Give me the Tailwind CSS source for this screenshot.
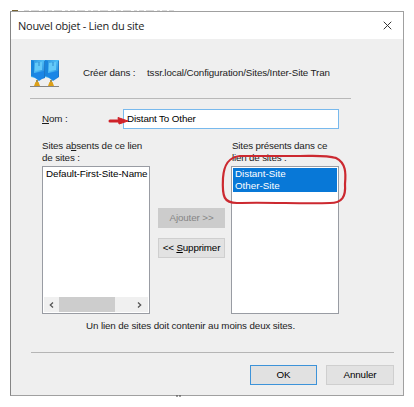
<!DOCTYPE html>
<html lang="fr">
<head>
<meta charset="utf-8">
<title>Nouvel objet - Lien du site</title>
<script src="https://cdn.jsdelivr.net/npm/@tailwindcss/browser@4"></script>
</head>
<body class="relative h-[407px] w-[414px] overflow-hidden bg-white pt-[11px] pl-[10px] font-['Liberation_Sans',Arial,sans-serif] text-[9.8px] leading-[12px] tracking-[-0.12px] text-[#1c1c1c]">
<main class="flex h-[385px] w-[394px] flex-col border border-[#a0a0a0] border-l-[#858585] bg-[#efefef] whitespace-nowrap">
  <header class="flex h-[27px] shrink-0 items-center justify-between bg-white pr-[11px] pl-[7px]">
    <h1 class="font-['Open_Sans','Noto_Sans',sans-serif] text-[11px] tracking-[-0.26px]">Nouvel objet - Lien du site</h1>
    <svg class="size-[9px]" viewBox="0 0 10 10" fill="none" stroke="#333" stroke-width="1.1"><path d="M.8.8l8.400 8.400M9.200.8L.8 9.200"/></svg>
  </header>

  <section class="ml-[19px] flex h-[60px] w-[321px] shrink-0 items-start border-b border-[#b8b8b8] pt-[20px]">
    <svg class="h-[29px] w-[30px] shrink-0" viewBox="0 0 30 29">
      <defs>
        <linearGradient id="b" x1="0" y1="0" x2="1" y2="1"><stop offset="0" stop-color="#2a8edb"/><stop offset=".45" stop-color="#4dbcf5"/><stop offset="1" stop-color="#0868cf"/></linearGradient>
      </defs>
      <path d="M1 1h14v18l-3 1-3 2-4-3-4-1z" fill="url(#b)"/>
      <path d="M15 1h14v17l-3 2-3 2-4-3-4-1z" fill="url(#b)"/>
      <path d="M1 1l3 1v16l-3-1zM15 1l3 1v16l-3-1z" fill="#1985dd"/>
      <path d="M5 4l7-1v8l-7 1zM19 4l7-1v8l-7 1z" fill="#64c9f8"/>
      <path d="M4 14l10-2v6l-5 3-5-3zM18 14l10-2v6l-5 3-5-3z" fill="#1a86e6"/>
      <path d="M14.500 2v16M9 3v4M23 3v4M28.500 2v15" stroke="#1b70bc" stroke-width=".7"/>
      <path d="M0 27.500h29" stroke="#858585"/>
      <path d="M7 21v3M21 21v3" stroke="#8b701d" stroke-width="1.500"/>
      <path d="M5.500 23h3l1.500 4H4zM19.500 23h3l1.500 4h-6z" fill="#dda018"/>
    </svg>
    <p class="mt-[8px] ml-[23px] w-[64px]">Créer dans :</p>
    <p class="mt-[8px]">tssr.local/Configuration/Sites/Inter-Site Tran</p>
  </section>

  <div class="mt-[10px] ml-[31px] flex h-[20px] shrink-0 items-center">
    <label class="w-[81px]" for="n"><u class="underline-offset-1">N</u>om :</label>
    <div id="n" class="flex h-[20px] w-[216px] items-center border border-[#78b9ed] bg-white pl-[3px] text-black">Distant To Other</div>
  </div>

  <div class="mt-[11px] ml-[31px] flex shrink-0">
    <section class="w-[108px]">
      <h2 class="h-[26px] tracking-[-0.14px]">Sites a<u class="underline-offset-1">b</u>sents de ce lien<br>de sites :</h2>
      <div class="flex h-[148px] flex-col justify-between border border-[#999ca3] bg-white">
        <div class="pt-[1px] pl-[3px] tracking-[-0.06px] text-black">Default-First-Site-Name</div>
        <div class="mx-px mb-px flex h-[15px] items-center bg-[#f0f0f0] pr-[6px] pl-[5px]">
          <svg class="h-[6px] w-[5px]" viewBox="0 0 5 6" fill="none" stroke="#555" stroke-width="1.3"><path d="M4 .5L1.3 3 4 5.5"/></svg>
          <div class="ml-[5px] h-[15px] w-[56px] bg-[#cdcdcd]"></div>
          <svg class="ml-auto h-[6px] w-[5px]" viewBox="0 0 5 6" fill="none" stroke="#555" stroke-width="1.3"><path d="M1 .5L3.7 3 1 5.5"/></svg>
        </div>
      </div>
    </section>
    <div class="flex w-[81px] flex-col items-end pt-[68px] pr-[6px]">
      <div class="flex h-[20px] w-[67px] items-center justify-center bg-[#cccccc] text-[#868686]">Ajouter &gt;&gt;</div>
      <div class="mt-[10px] flex h-[20px] w-[67px] items-center justify-center border border-[#cfcfcf] bg-[#e2e2e2] tracking-[-0.15px] text-black"><span>&lt;&lt; <u class="underline-offset-1">S</u>upprimer</span></div>
    </div>
    <section class="w-[108px]">
      <h2 class="h-[26px] pl-px tracking-[-0.18px]">Sites présents dans ce<br>lien de sites :</h2>
      <div class="h-[148px] border border-[#999ca3] bg-white px-px pt-px text-white">
        <div class="h-[12px] bg-[#0878d7] pl-[2px] tracking-normal">Distant-Site</div>
        <div class="h-[12px] bg-[#0878d7] pl-[2px] tracking-normal">Other-Site</div>
      </div>
    </section>
  </div>

  <p class="mt-[6px] ml-[75px] shrink-0">Un lien de sites doit contenir au moins deux sites.</p>

  <footer class="mt-[20px] ml-[20px] flex w-[363px] shrink-0 justify-end gap-[9px] border-t border-[#b5b5b5] pt-[12px]">
    <div class="flex h-[20px] w-[67px] items-center justify-center border-[1.5px] border-[#3d93d9] bg-[#e1e1e1] text-black">OK</div>
    <div class="flex h-[20px] w-[68px] items-center justify-center border border-[#cfcfcf] bg-[#e2e2e2] text-black">Annuler</div>
  </footer>
</main>

<!-- Hand-drawn annotations over the dialog -->
<svg class="pointer-events-none absolute top-0 left-0 h-[407px] w-[414px]" viewBox="0 0 414 407" fill="none">
  <path d="M12 10.500h6" stroke="#766332"/>
  <path d="M24 10.500h150" stroke="#ccc" stroke-width=".7" stroke-dasharray="5 2 8 3 3 2"/>
  <path d="M176 396h2M179 396h2" stroke="#444"/>
  <path d="M110 121l9 0" stroke="#cf2229" stroke-width="3" stroke-linecap="round"/>
  <path d="M118 117.500l10 3.500-9 3z" fill="#cf2229" stroke="#cf2229" stroke-linejoin="round"/>
  <path d="M336 158C326 155 314 156 300 156L240 156C229 157 224 164 223 178C222 197 224 203 237 203C268 202 302 204 330 203C342 203 346 197 345 184C346 173 346 163 336 158" stroke="#cc2930" stroke-width="2.200" stroke-linecap="round"/>
</svg>
</body>
</html>
